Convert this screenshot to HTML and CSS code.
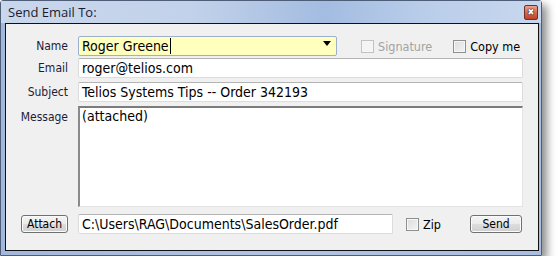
FILE: index.html
```html
<!DOCTYPE html>
<html lang="en">
<head>
  <meta charset="UTF-8">
  <title>Send Email To:</title>
  <link rel="stylesheet" href="styles.css">
</head>
<body>
  <div class="window">
    <!-- Title bar -->
    <div class="titlebar">
      <span class="title">Send Email To:</span>
      <span class="close-btn">&#x2716;</span>
    </div>

    <!-- Dialog body -->
    <div class="client">
      <div class="row row-name">
        <label class="label">Name</label>
        <div class="combo">
          <span class="value">Roger Greene</span><span class="caret"></span>
          <span class="arrow"></span>
        </div>
        <span class="check disabled"><span class="box"></span>Signature</span>
        <span class="check copy"><span class="box"></span>Copy me</span>
      </div>

      <div class="row row-email">
        <label class="label">Email</label>
        <div class="field">roger@telios.com</div>
      </div>

      <div class="row row-subject">
        <label class="label">Subject</label>
        <div class="field">Telios Systems Tips -- Order 342193</div>
      </div>

      <div class="row row-message">
        <label class="label label-top">Message</label>
        <div class="memo">(attached)</div>
      </div>

      <div class="row row-attach">
        <div class="label"><button class="btn btn-attach">Attach</button></div>
        <div class="field path">C:\Users\RAG\Documents\SalesOrder.pdf</div>
        <span class="check zip"><span class="box"></span>Zip</span>
        <button class="btn btn-send">Send</button>
      </div>
    </div>
  </div>
</body>
</html>
```

FILE: styles.css
```css
body {
  margin: 0;
  padding: 0;
  background-color: #ffffff;
  font-family: "DejaVu Sans Condensed", "DejaVu Sans", sans-serif;
  color: #000000;
}

.window {
  width: 542px;
  height: 256px;
  box-sizing: border-box;
  border: 1px solid #4e5d78;
  border-radius: 3px 3px 0 0;
  background: linear-gradient(90deg, #a2b7dc 0%, #b0c3e4 50%, #a9bee2 100%);
  box-shadow: 5px 5px 8px rgba(0, 0, 0, 0.45);
  display: flex;
  flex-direction: column;
}

.titlebar {
  height: 22px;
  display: flex;
  align-items: flex-start;
  justify-content: space-between;
  background: linear-gradient(90deg, #c9d7ec 0%, #c2d2ea 35%, #a3bce1 60%, #b9cdea 78%, #c8d7ee 100%);
}

.title {
  font-family: "Open Sans", "DejaVu Sans", sans-serif;
  font-size: 13px;
  color: #1b1b2f;
  margin: 2px 0 0 7px;
}

.close-btn {
  width: 14px;
  height: 15px;
  box-sizing: border-box;
  margin: 4px 3px 0 0;
  border: 1px solid #6a3428;
  border-radius: 2px;
  background: linear-gradient(180deg, #e9a48f 0%, #d5694d 50%, #c2412a 100%);
  color: #ffffff;
  font-size: 9px;
  line-height: 13px;
  text-align: center;
  text-shadow: 0 0 1px #301810, 0 0 1px #301810, 0 0 1px #301810;
}

.client {
  flex: 1;
  margin: 0 2px 4px 4px;
  border: 1px solid #111111;
  background-color: #f0f0f0;
  padding: 12px 15px 0 0;
  font-size: 14px;
}

.row {
  display: flex;
  align-items: center;
}

.row-name { height: 20px; }
.row-email { height: 20px; margin-top: 2px; }
.row-subject { height: 20px; margin-top: 4px; }
.row-message { height: 101px; margin-top: 4px; align-items: stretch; }
.row-attach { height: 20px; margin-top: 7px; }

.label {
  width: 62px;
  flex-shrink: 0;
  margin-right: 10px;
  text-align: right;
  font-size: 12px;
  color: #1c1c3a;
}

.label-top {
  padding-top: 4px;
}

.field,
.combo {
  flex: 1;
  height: 20px;
  box-sizing: border-box;
  border: 1px solid #dcdcdc;
  border-top-color: #b4b4b4;
  border-radius: 2px;
  background-color: #ffffff;
  padding: 0 3px;
  line-height: 18px;
  white-space: nowrap;
}

.combo {
  flex: none;
  width: 259px;
  position: relative;
  background-color: #ffffbe;
  border-color: #9cb0cc;
}

.caret {
  display: inline-block;
  width: 1px;
  height: 16px;
  margin-left: 1px;
  vertical-align: -3px;
  background-color: #000000;
}

.arrow {
  position: absolute;
  right: 5px;
  top: 4px;
  border-left: 4px solid transparent;
  border-right: 4px solid transparent;
  border-top: 5px solid #000000;
}

.memo {
  flex: 1;
  box-sizing: border-box;
  border: 1px solid #e4e4e4;
  border-top: 2px solid #7c7c7c;
  border-left: 2px solid #8a8a8a;
  background-color: #ffffff;
  padding: 0 2px;
  line-height: 17px;
}

.check {
  display: flex;
  align-items: center;
  font-size: 12.5px;
  color: #000000;
  white-space: nowrap;
}

.check .box {
  width: 13px;
  height: 13px;
  box-sizing: border-box;
  margin-right: 4px;
  border: 1px solid #8e8f8f;
  background: linear-gradient(135deg, #dcdcdc 0%, #f4f4f4 100%);
  box-shadow: inset 0 0 0 1px #f6f6f6;
}

.check.disabled {
  margin-left: 24px;
  color: #a3a3a3;
}

.check.disabled .box {
  border-color: #c2c2c2;
  background: #f4f4f4;
}

.check.copy {
  margin-left: 21px;
}

.path {
  flex: none;
  width: 315px;
}

.check.zip {
  margin-left: 13px;
}

.btn {
  height: 18px;
  box-sizing: border-box;
  border: 1px solid #707070;
  border-radius: 3px;
  background: linear-gradient(180deg, #f4f4f4 0%, #ebebeb 50%, #dddddd 51%, #cfcfcf 100%);
  box-shadow: inset 0 0 0 1px #fbfbfb;
  font-family: "DejaVu Sans Condensed", "DejaVu Sans", sans-serif;
  font-size: 12px;
  color: #000000;
  padding: 0;
}

.btn-attach {
  width: 47px;
}

.btn-send {
  width: 52px;
  margin-left: auto;
  margin-right: 1px;
}
```
